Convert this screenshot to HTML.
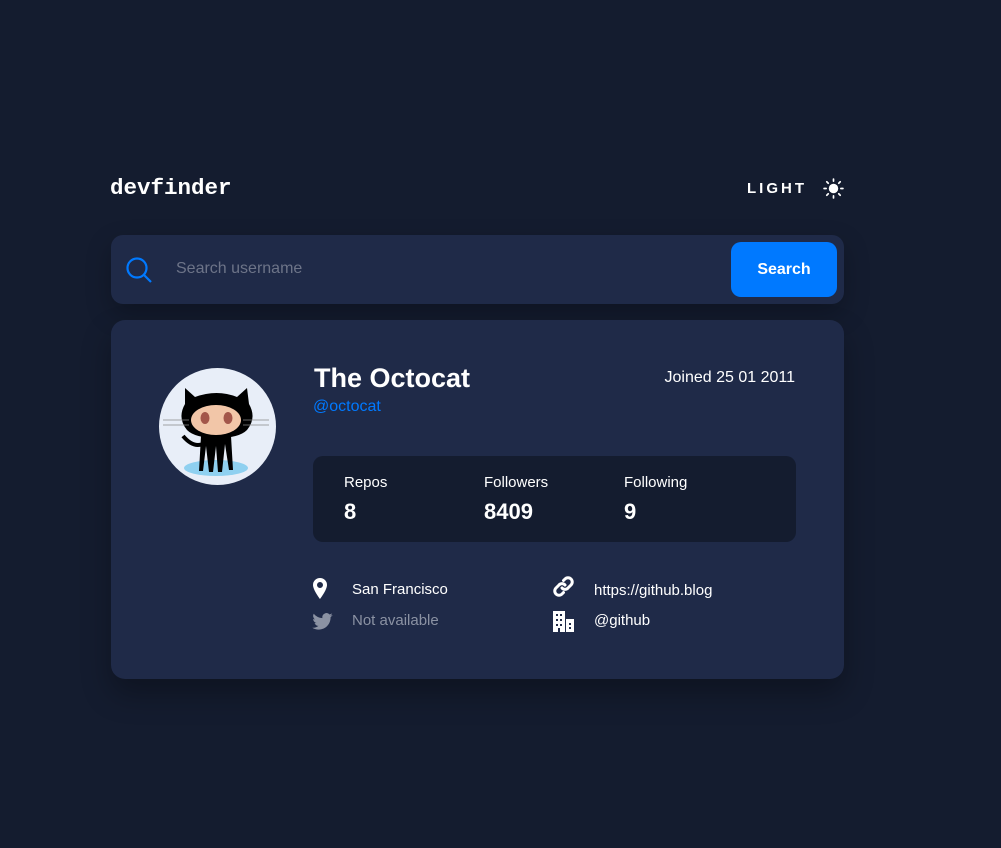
<!DOCTYPE html>
<html><head><meta charset="utf-8"><style>
*{margin:0;padding:0;box-sizing:border-box}
body{width:1001px;height:848px;background:#141c2f;font-family:"Liberation Sans",sans-serif;color:#fff;position:relative;overflow:hidden}
.abs{position:absolute}
.logo{left:110px;top:175px;font-family:"Liberation Mono",monospace;font-weight:bold;font-size:22.5px}
.light{left:747px;top:180px;font-size:15px;font-weight:bold;letter-spacing:3px}
.search{left:111px;top:235px;width:733px;height:69px;background:#1f2a48;border-radius:12px;box-shadow:0 10px 25px rgba(0,0,0,.25)}
.btn{position:absolute;right:7px;top:7px;width:106px;height:55px;background:#0079ff;border-radius:10px;font-weight:bold;font-size:16px;display:flex;align-items:center;justify-content:center}
.ph{position:absolute;left:65px;top:25px;font-size:16px;color:#6d7488}
.card{left:111px;top:320px;width:733px;height:359px;background:#1f2a48;border-radius:14px;box-shadow:0 15px 30px rgba(0,0,0,.3)}
.stats{left:202px;top:136px;width:483px;height:86px;background:#141c2f;border-radius:10px}
.sl{font-size:15px;position:absolute;top:18px}
.sv{font-size:22px;font-weight:bold;position:absolute;top:43px}
.it{font-size:15px;position:absolute}
</style></head><body>
<div class="abs logo">devfinder</div>
<div class="abs light">LIGHT</div>
<svg class="abs" style="left:823px;top:178px" width="21" height="21" viewBox="0 0 20 20" fill="#fff"><circle cx="10" cy="10" r="4.5"/><g stroke="#fff" stroke-width="1.6" stroke-linecap="round"><path d="M10 1v2M10 17v2M1 10h2M17 10h2M3.6 3.6l1.4 1.4M15 15l1.4 1.4M3.6 16.4L5 15M15 5l1.4-1.4"/></g></svg>
<div class="abs search">
<svg style="position:absolute;left:15px;top:22px" width="27" height="27" viewBox="0 0 27 27" fill="none" stroke="#0079ff" stroke-width="2.2"><circle cx="11" cy="11" r="9.5"/><path d="M18 18l7 7"/></svg>
<div class="ph">Search username</div>
<div class="btn">Search</div>
</div>
<div class="abs card">
<svg style="position:absolute;left:48px;top:48px" width="117" height="117" viewBox="0 0 117 117">
<circle cx="58.5" cy="58.5" r="58.5" fill="#e8eef8"/>
<ellipse cx="57" cy="100" rx="32" ry="8" fill="#8fd0f0"/>
<path d="M26 20l10 9q22-8 42 0l10-9 2 16q8 14-2 26q-8 8-30 8q-22 0-30-8q-10-12-2-26z" fill="#000"/>
<ellipse cx="57" cy="52" rx="25" ry="15" fill="#f2c6a8"/>
<ellipse cx="46" cy="50" rx="4.5" ry="6" fill="#a3564a"/><ellipse cx="69" cy="50" rx="4.5" ry="6" fill="#a3564a"/>
<path d="M42 68h30l2 34h-4l-4-26-3 28h-4l-2-26-3 26h-4l-3-26-3 25h-4z" fill="#000"/>
<path d="M44 76q-10 4-20-8" stroke="#000" stroke-width="4" fill="none"/>
<path d="M4 52h26M4 57h26M84 52h26M84 57h26" stroke="#888" stroke-width="0.7"/>
</svg>
<div style="position:absolute;left:203px;top:43px;font-size:27px;font-weight:bold">The Octocat</div>
<div style="position:absolute;left:202px;top:78px;font-size:16px;color:#0079ff">@octocat</div>
<div style="position:absolute;right:49px;top:49px;font-size:16px">Joined 25 01 2011</div>
<div class="stats abs" style="position:absolute">
<div class="sl" style="left:31px">Repos</div><div class="sv" style="left:31px">8</div>
<div class="sl" style="left:171px">Followers</div><div class="sv" style="left:171px">8409</div>
<div class="sl" style="left:311px">Following</div><div class="sv" style="left:311px">9</div>
</div>
<svg style="position:absolute;left:202px;top:258px" width="14" height="21" viewBox="0 0 14 21" fill="#fff"><path d="M7 0a7 7 0 0 0-7 7c0 5 7 14 7 14s7-9 7-14a7 7 0 0 0-7-7zm0 10a3 3 0 1 1 0-6 3 3 0 0 1 0 6z"/></svg>
<div class="it" style="left:241px;top:261px">San Francisco</div>
<svg style="position:absolute;left:201px;top:293px" width="21" height="17" viewBox="0 0 24 20" fill="#8b92a3"><path d="M24 2.4a10 10 0 0 1-2.8.8 5 5 0 0 0 2.2-2.7 10 10 0 0 1-3.1 1.2A4.9 4.9 0 0 0 11.9 6 14 14 0 0 1 1.7.9a4.9 4.9 0 0 0 1.5 6.6A4.9 4.9 0 0 1 1 6.9a4.9 4.9 0 0 0 3.9 4.8 5 5 0 0 1-2.2.1 4.9 4.9 0 0 0 4.6 3.4A9.9 9.9 0 0 1 0 17.3 14 14 0 0 0 7.500 19.5c9.1 0 14-7.5 14-14v-.6A10 10 0 0 0 24 2.4z"/></svg>
<div class="it" style="left:241px;top:292px;color:#8b92a3">Not available</div>
<svg style="position:absolute;left:442px;top:256px" width="21" height="21" viewBox="0 0 21 21" fill="none" stroke="#fff" stroke-width="3" stroke-linecap="round"><path d="M9 12a4 4 0 0 0 6 0l3-3a4 4 0 0 0-6-6l-1.5 1.5"/><path d="M12 9a4 4 0 0 0-6 0l-3 3a4 4 0 0 0 6 6l1.5-1.5"/></svg>
<div class="it" style="left:483px;top:262px">https://github.blog</div>
<svg style="position:absolute;left:442px;top:291px" width="21" height="21" viewBox="0 0 21 21" fill="#fff"><path d="M0 0h12v21H0z"/><path d="M13 8h8v13h-8z"/><g fill="#1f2a48"><rect x="3" y="3" width="2" height="2"/><rect x="7" y="3" width="2" height="2"/><rect x="3" y="8" width="2" height="2"/><rect x="7" y="8" width="2" height="2"/><rect x="3" y="13" width="2" height="2"/><rect x="7" y="13" width="2" height="2"/><rect x="16" y="12" width="2" height="2"/><rect x="16" y="16" width="2" height="2"/><rect x="5" y="17" width="2" height="4"/></g></svg>
<div class="it" style="left:483px;top:292px">@github</div>
</div>
</body></html>
